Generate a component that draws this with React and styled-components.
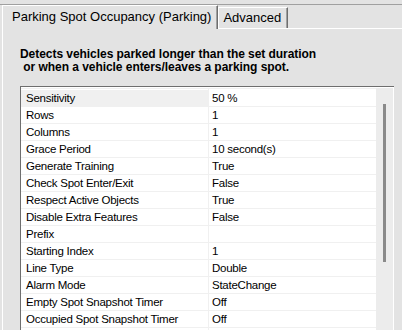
import React from "react";
import styled, { createGlobalStyle } from "styled-components";

const Global = createGlobalStyle`
  html, body { margin: 0; padding: 0; background: #e3e3e3; }
  #root { width: 402px; height: 330px; overflow: hidden; }
`;

const Window = styled.div`
  width: 402px;
  height: 330px;
  box-sizing: border-box;
  padding-top: 4px;
  background: #e3e3e3;
  font-family: "Liberation Sans", Arial, sans-serif;
  color: #000;
  overflow: hidden;
`;

const Frame = styled.div`
  height: 100%;
  box-sizing: border-box;
  border-top: 1px solid #a0a0a0;
  padding-left: 2px;
  display: flex;
  flex-direction: column;
`;

const TabStrip = styled.div`
  display: flex;
  align-items: flex-end;
  height: 23px;
  position: relative;
  z-index: 1;
`;

const Tab = styled.div`
  box-sizing: border-box;
  height: ${(p) => (p.$active ? "24px" : "21px")};
  margin-bottom: ${(p) => (p.$active ? "-1px" : "0")};
  padding: ${(p) => (p.$active ? "2px 6px 0 9px" : "1px 6px 0 4px")};
  border-left: 1px solid #ffffff;
  border-top: 1px solid #ffffff;
  border-right: 1px solid #6e6e6e;
  box-shadow: inset -1px 0 0 #a0a0a0;
  background: #e3e3e3;
  font-size: 13px;
  line-height: 17px;
  white-space: nowrap;
  color: #000;
`;

const Panel = styled.div`
  flex: 1;
  box-sizing: border-box;
  border-top: 1px solid #ffffff;
  border-left: 1px solid #ffffff;
  padding: 19px 0 0 17px;
  display: flex;
  flex-direction: column;
  min-height: 0;
`;

const Description = styled.div`
  font-weight: bold;
  font-size: 12px;
  line-height: 13px;
  letter-spacing: -0.05px;
  white-space: pre;
  padding-bottom: 12px;
`;

const Grid = styled.div`
  flex: 1;
  width: 374px;
  box-sizing: border-box;
  border-top: 1px solid #6e6e6e;
  border-left: 1px solid #6e6e6e;
  background: #ffffff;
  display: flex;
  padding-top: 1px;
  min-height: 0;
`;

const Rows = styled.div`
  flex: 1;
  padding-top: 1px;
  border-top: 1px solid #f0f0f0;
  background: linear-gradient(to right, transparent 187px, #f0f0f0 187px, #f0f0f0 188px, transparent 188px);
`;

const Row = styled.div`
  display: grid;
  grid-template-columns: 187px 1fr;
  height: 17px;
  box-sizing: border-box;
  border-bottom: 1px solid #f0f0f0;
  font-size: 11.5px;
  line-height: 16px;
  letter-spacing: -0.25px;
`;

const Name = styled.div`
  padding-left: 5px;
  background: ${(p) => (p.$selected ? "#f0f0f0" : "transparent")};
  white-space: nowrap;
  overflow: hidden;
`;

const Value = styled.div`
  padding-left: 4px;
  white-space: nowrap;
  overflow: hidden;
`;

const Scrollbar = styled.div`
  width: 17px;
  background: #ececec;
  position: relative;
  margin-right: 1px;
`;

const Thumb = styled.div`
  position: absolute;
  left: 7px;
  top: 16px;
  width: 3px;
  height: 158px;
  background: #8a8a8a;
`;

const props = [
  ["Sensitivity", "50 %"],
  ["Rows", "1"],
  ["Columns", "1"],
  ["Grace Period", "10 second(s)"],
  ["Generate Training", "True"],
  ["Check Spot Enter/Exit", "False"],
  ["Respect Active Objects", "True"],
  ["Disable Extra Features", "False"],
  ["Prefix", ""],
  ["Starting Index", "1"],
  ["Line Type", "Double"],
  ["Alarm Mode", "StateChange"],
  ["Empty Spot Snapshot Timer", "Off"],
  ["Occupied Spot Snapshot Timer", "Off"],
];

export default function App() {
  return (
    <>
      <Global />
      <Window>
        <Frame>
          <TabStrip>
            <Tab $active>Parking Spot Occupancy (Parking)</Tab>
            <Tab>Advanced</Tab>
          </TabStrip>
          <Panel>
            <Description>
              {"Detects vehicles parked longer than the set duration\n or when a vehicle enters/leaves a parking spot."}
            </Description>
            <Grid>
              <Rows>
                {props.map(([n, v], i) => (
                  <Row key={n}>
                    <Name $selected={i === 0}>{n}</Name>
                    <Value>{v}</Value>
                  </Row>
                ))}
              </Rows>
              <Scrollbar>
                <Thumb />
              </Scrollbar>
            </Grid>
          </Panel>
        </Frame>
      </Window>
    </>
  );
}
